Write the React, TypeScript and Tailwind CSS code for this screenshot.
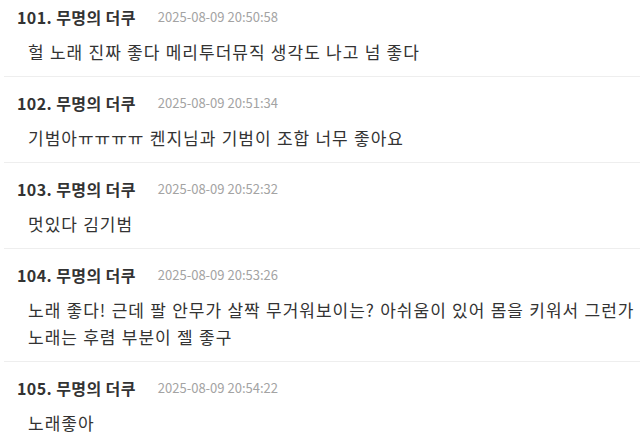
import React from "react";

type Comment = { no: number; name: string; date: string; lines: string[] };

const comments: Comment[] = [
  { no: 101, name: "무명의 더쿠", date: "2025-08-09 20:50:58", lines: ["헐 노래 진짜 좋다 메리투더뮤직 생각도 나고 넘 좋다"] },
  { no: 102, name: "무명의 더쿠", date: "2025-08-09 20:51:34", lines: ["기범아ㅠㅠㅠㅠ 켄지님과 기범이 조합 너무 좋아요"] },
  { no: 103, name: "무명의 더쿠", date: "2025-08-09 20:52:32", lines: ["멋있다 김기범"] },
  {
    no: 104,
    name: "무명의 더쿠",
    date: "2025-08-09 20:53:26",
    lines: [
      "노래 좋다! 근데 팔 안무가 살짝 무거워보이는? 아쉬움이 있어 몸을 키워서 그런가",
      "노래는 후렴 부분이 젤 좋구",
    ],
  },
  { no: 105, name: "무명의 더쿠", date: "2025-08-09 20:54:22", lines: ["노래좋아"] },
];

function CommentItem({ c }: { c: Comment }) {
  return (
    <div className="border-b border-[#eeeeee] pt-[15px] pb-[11px]">
      <div className="flex items-center gap-[22px] h-[22px] pl-[13px] whitespace-nowrap">
        <span className="text-[16px] font-bold tracking-[0.4px] text-[#333333]">
          {c.no}. {c.name}
        </span>
        <span className="text-[13px] text-[#a3a3a3]">{c.date}</span>
      </div>
      <div className="mt-[10px] pl-[24px] text-[17px] leading-[27px] tracking-[1px] [word-spacing:0.5px] text-[#333333] whitespace-pre">
        {c.lines.map((l, i) => (
          <div key={i}>{l}</div>
        ))}
      </div>
    </div>
  );
}

export default function App() {
  return (
    <div
      className="w-[640px] h-[444px] overflow-hidden bg-white"
      style={{ fontFamily: '"Noto Sans CJK KR", "Noto Sans", sans-serif' }}
    >
      <div className="-mt-[9px] pl-[4px]">
        {comments.map((c) => (
          <CommentItem key={c.no} c={c} />
        ))}
      </div>
    </div>
  );
}
